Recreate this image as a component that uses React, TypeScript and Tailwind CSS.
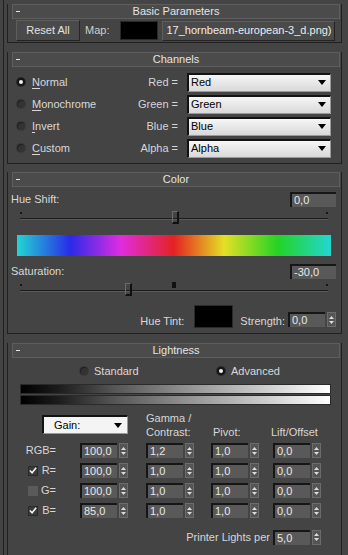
import React from "react";

function Header({ title }: { title: string }) {
  return (
    <div className="-mt-[7px] ml-[4px] mr-[1px] h-[15px] flex items-center bg-[#4b4b4b] border border-[#5e5e5e] text-[#e4e4e4] leading-none">
      <span className="ml-[3px] w-[4px] h-[1px] bg-[#e6e6e6]" />
      <span className="flex-1 text-center -ml-[7px]">{title}</span>
    </div>
  );
}

function Rollout({ title, className, children }: { title: string; className: string; children: React.ReactNode }) {
  return (
    <div className={"ml-[3px] w-[335px] border-x border-b border-[#202020] " + className}>
      <Header title={title} />
      {children}
    </div>
  );
}

function Radio({ on }: { on?: boolean }) {
  return (
    <span
      className={
        "w-[8px] h-[8px] rounded-full flex items-center justify-center shrink-0 " +
        (on ? "bg-[#151515] shadow-[0_0_0_1px_#2a2a2a]" : "bg-[#333333] shadow-[inset_1px_1px_0_#222,0_0_0_1px_#3a3a3a]")
      }
    >
      {on && <span className="w-[4px] h-[4px] rounded-full bg-[#f0f0f0]" />}
    </span>
  );
}

function U({ c, rest }: { c: string; rest: string }) {
  return (
    <span className="text-[#d8d8d8]">
      <span className="underline underline-offset-2">{c}</span>
      {rest}
    </span>
  );
}

function Select({ value }: { value: string }) {
  return (
    <div className="h-[19px] w-[144px] flex items-center bg-linear-to-b from-[#f6f6f6] to-[#d9d9d9] border-l-2 border-t-2 border-[#121212] border-r border-b border-r-[#9a9a9a] border-b-[#9a9a9a] pl-[2px] text-black">
      <span className="flex-1 leading-none">{value}</span>
      <svg width="8" height="5" viewBox="0 0 8 5" className="mr-[4px]">
        <path d="M0 0 L8 0 L4 5 Z" fill="#000" />
      </svg>
    </div>
  );
}

function Field({ v }: { v: string }) {
  return (
    <div className="h-[15px] w-[46px] bg-[#595959] border-t-2 border-l-2 border-[#161616] text-[#e8e8e8] pl-[2px] leading-[13px]">
      {v}
    </div>
  );
}

function Arrows() {
  return (
    <div className="ml-[2px] w-[9px] h-[15px] bg-[#555555] border border-[#6c6c6c] flex flex-col items-center justify-center gap-[2px]">
      <svg width="5" height="3" viewBox="0 0 5 3">
        <path d="M0 3 L2.5 0 L5 3 Z" fill="#dcdcdc" />
      </svg>
      <svg width="5" height="3" viewBox="0 0 5 3">
        <path d="M0 0 L5 0 L2.5 3 Z" fill="#dcdcdc" />
      </svg>
    </div>
  );
}

function Spinner({ v }: { v: string }) {
  return (
    <div className="flex items-center h-[15px]">
      <div className="h-[15px] w-[37px] bg-[#595959] border-t-2 border-l-2 border-[#161616] text-[#e8e8e8] pl-[2px] leading-[13px]">
        {v}
      </div>
      <Arrows />
    </div>
  );
}

function Slider({ pos, marker }: { pos: number; marker?: number }) {
  return (
    <div className="relative h-[18px] ml-[12px] w-[308px]">
      <span className="absolute left-0 top-[5px] w-[2px] h-[2px] bg-[#151515]" />
      <span className="absolute right-0 top-[5px] w-[2px] h-[2px] bg-[#151515]" />
      <span className="absolute left-0 right-0 top-[11px] h-[2px] bg-[#1c1c1c] border-b border-[#5a5a5a]" />
      {marker !== undefined && (
        <span className="absolute top-[3px] w-[4px] h-[6px] bg-[#111]" style={{ left: marker }} />
      )}
      <span
        className="absolute top-[4px] w-[7px] h-[13px] border-r-2 border-b-2 border-[#111] border-l border-t border-l-[#6a6a6a] border-t-[#6a6a6a]"
        style={{ left: pos }}
      />
    </div>
  );
}

function Check({ on, dim }: { on?: boolean; dim?: boolean }) {
  return (
    <span
      className={
        "w-[10px] h-[10px] flex items-center justify-center shrink-0 " +
        (dim ? "bg-[#5a5a5a]" : "bg-[#3a3a3a] border border-[#2a2a2a]")
      }
    >
      {on && (
        <svg width="9" height="9" viewBox="0 0 9 9">
          <path d="M1 4.5 L3.5 7 L8 1.5" stroke="#f2f2f2" strokeWidth="1.8" fill="none" />
        </svg>
      )}
    </span>
  );
}

function GainRow({ label, check, values }: { label: string; check?: "on" | "dim"; values: string[] }) {
  return (
    <div className="grid grid-cols-[72px_66px_65px_62px_60px] h-[15px] items-center">
      <div className="flex items-center h-[15px]">
        {check ? (
          <span className="ml-[20px]">
            <Check on={check === "on"} dim={check === "dim"} />
          </span>
        ) : null}
        <span className="flex-1 text-right pr-[24px] text-[#d6d6d6] leading-none">{label}</span>
      </div>
      {values.map((v, i) => (
        <Spinner key={i} v={v} />
      ))}
    </div>
  );
}

export default function App() {
  return (
    <div className="w-[348px] h-[555px] overflow-hidden bg-[#444444] pl-[3px] font-['Liberation_Sans',Arial,sans-serif] text-[11px] text-[#d8d8d8]">
      <div className="h-full border-l border-[#202020] pt-[11px]">
        {/* Basic Parameters */}
        <Rollout title="Basic Parameters" className="">
          <div className="flex items-center mt-[1px] mb-[1px] pl-[8px] h-[21px]">
            <div className="w-[64px] h-[21px] flex items-center justify-center bg-[#4a4a4a] border border-t-[#5e5e5e] border-l-[#5e5e5e] border-r-[#242424] border-b-[#242424] text-[#e2e2e2]">
              Reset All
            </div>
            <span className="ml-[5px] text-[#cfcfcf]">Map:</span>
            <div className="ml-[11px] w-[38px] h-[19px] bg-black border border-[#2a2a2a]" />
            <div className="ml-[4px] w-[173px] h-[20px] flex items-center justify-center bg-[#4a4a4a] border border-t-[#5e5e5e] border-l-[#5e5e5e] border-r-[#242424] border-b-[#242424] text-[#ececec] whitespace-nowrap overflow-hidden">
              17_hornbeam-european-3_d.png)
            </div>
          </div>
        </Rollout>

        {/* Channels */}
        <Rollout title="Channels" className="mt-[16px]">
          <div className="mt-[4px] pb-[4px]">
            {[
              ["N", "ormal", "Red =", "Red", true],
              ["M", "onochrome", "Green =", "Green", false],
              ["I", "nvert", "Blue =", "Blue", false],
              ["C", "ustom", "Alpha =", "Alpha", false],
            ].map(([c, rest, lab, val, on], i) => (
              <div key={i} className="h-[22px] flex items-center pl-[9px] pr-[10px]">
                <div className="w-[100px] flex items-center gap-[7px]">
                  <Radio on={on as boolean} />
                  <U c={c as string} rest={rest as string} />
                </div>
                <span className="flex-1 text-right text-[#d6d6d6]">{lab as string}</span>
                <div className="ml-[9px]">
                  <Select value={val as string} />
                </div>
              </div>
            ))}
          </div>
        </Rollout>

        {/* Color */}
        <Rollout title="Color" className="mt-[15px]">
          <div className="mt-[5px] h-[15px] flex items-center justify-between pl-[3px] pr-[5px]">
            <span className="text-[#d8d8d8]">Hue Shift:</span>
            <Field v="0,0" />
          </div>
          <Slider pos={152} />
          <div className="mt-[10px] ml-[9px] w-[314px] h-[21px] bg-[linear-gradient(to_right,#22d6d2_0%,#2a2ae8_17%,#e02ce0_33%,#e42222_50%,#e4e024_66%,#24d424_83%,#22d6d2_100%)]" />
          <div className="mt-[8px] h-[15px] flex items-center justify-between pl-[3px] pr-[5px]">
            <span className="text-[#d8d8d8]">Saturation:</span>
            <Field v="-30,0" />
          </div>
          <Slider pos={105} marker={152} />
          <div className="mt-[8px] h-[23px] flex items-end justify-end pr-[5px] pb-[5px] box-content">
            <span className="mb-[0px] leading-[14px] text-[#d8d8d8]">Hue Tint:</span>
            <div className="ml-[10px] w-[39px] h-[23px] bg-black border border-[#2a2a2a]" />
            <span className="ml-[7px] leading-[14px] text-[#d8d8d8]">Strength:</span>
            <div className="ml-[3px] mb-[1px]">
              <Spinner v="0,0" />
            </div>
          </div>
        </Rollout>

        {/* Lightness */}
        <Rollout title="Lightness" className="mt-[16px] pb-[40px]">
          <div className="mt-[6px] h-[14px] flex items-center pl-[72px]">
            <div className="w-[137px] flex items-center gap-[6px]">
              <Radio />
              <span className="text-[#d8d8d8]">Standard</span>
            </div>
            <div className="flex items-center gap-[6px]">
              <Radio on />
              <span className="text-[#d8d8d8]">Advanced</span>
            </div>
          </div>
          <div className="mt-[6px] ml-[12px] w-[311px] h-[10px] border border-[#2a2a2a] bg-[linear-gradient(to_right,#000_0%,#1c1c1c_12%,#555_30%,#959595_55%,#cfcfcf_80%,#fff_100%)]" />
          <div className="mt-[1px] ml-[12px] w-[311px] h-[10px] border border-[#2a2a2a] bg-[linear-gradient(to_right,#000_0%,#1c1c1c_12%,#555_30%,#959595_55%,#cfcfcf_80%,#fff_100%)]" />

          <div className="mt-[5px] h-[29px] grid grid-cols-[138px_65px_62px_60px] items-end">
            <div className="self-start mt-[5px] ml-[34px] w-[86px] h-[19px] flex items-center bg-[#f4f4f4] border-l-2 border-t-2 border-[#121212] border-r border-b border-r-[#9a9a9a] border-b-[#9a9a9a] text-black">
              <span className="flex-1 pl-[10px] leading-none">Gain:</span>
              <svg width="8" height="5" viewBox="0 0 8 5" className="mr-[5px]">
                <path d="M0 0 L8 0 L4 5 Z" fill="#000" />
              </svg>
            </div>
            <div className="leading-[14px] text-[#d6d6d6]">
              Gamma /
              <br />
              Contrast:
            </div>
            <div className="leading-[14px] pl-[2px] text-[#d6d6d6]">Pivot:</div>
            <div className="leading-[14px] -ml-[2px] text-[#d6d6d6]">Lift/Offset</div>
          </div>

          <div className="mt-[4px] flex flex-col gap-[5px]">
            <GainRow label="RGB=" values={["100,0", "1,2", "1,0", "0,0"]} />
            <GainRow label="R=" check="on" values={["100,0", "1,0", "1,0", "0,0"]} />
            <GainRow label="G=" check="dim" values={["100,0", "1,0", "1,0", "0,0"]} />
            <GainRow label="B=" check="on" values={["85,0", "1,0", "1,0", "0,0"]} />
          </div>

          <div className="mt-[11px] h-[15px] grid grid-cols-[265px_60px] items-center">
            <span className="text-right pr-[3px] text-[#d6d6d6]">Printer Lights per</span>
            <Spinner v="5,0" />
          </div>
        </Rollout>
      </div>
    </div>
  );
}
